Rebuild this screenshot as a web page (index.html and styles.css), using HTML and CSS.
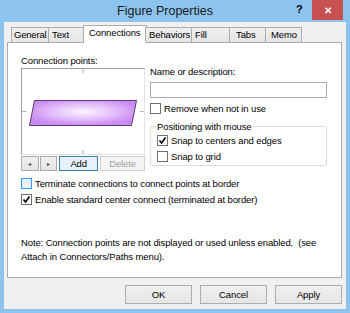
FILE: index.html
```html
<!DOCTYPE html>
<html lang="en">
<head>
    <meta charset="UTF-8">
    <title>Figure Properties</title>
    <link rel="stylesheet" href="styles.css">
</head>
<body>
    <div class="window">
        <div class="titlebar">
            <span class="title">Figure Properties</span>
            <span class="help">?</span>
            <span class="close">&#x2715;</span>
        </div>
        <div class="client">
            <div class="tabs">
                <div class="tab t-general">General</div>
                <div class="tab t-text">Text</div>
                <div class="tab active">Connections</div>
                <div class="tab t-behaviors">Behaviors</div>
                <div class="tab t-fill">Fill</div>
                <div class="tab t-tabs">Tabs</div>
                <div class="tab t-memo">Memo</div>
            </div>
            <div class="panel">
                <div class="top-row">
                    <div class="left-col">
                        <div class="label">Connection points:</div>
                        <div class="preview">
                            <svg width="122" height="85" viewBox="0 0 122 85">
                                <defs>
                                    <radialGradient id="shapeFill" cx="0.5" cy="0.45" r="0.55">
                                        <stop offset="0" stop-color="#fbf4ff"/>
                                        <stop offset="0.55" stop-color="#e3bdfa"/>
                                        <stop offset="1" stop-color="#c98af2"/>
                                    </radialGradient>
                                </defs>
                                <line x1="61" y1="0" x2="61" y2="4" stroke="#b0b0b0"/>
                                <line x1="61" y1="81" x2="61" y2="85" stroke="#b0b0b0"/>
                                <line x1="0" y1="42.5" x2="4" y2="42.5" stroke="#b0b0b0"/>
                                <line x1="118" y1="42.5" x2="122" y2="42.5" stroke="#b0b0b0"/>
                                <polygon points="12.5,31.5 114.5,31.5 109.5,56.5 7.5,56.5" fill="url(#shapeFill)" stroke="#5c3a6c" stroke-width="1"/>
                            </svg>
                        </div>
                        <div class="point-buttons">
                            <div class="btn small">&#9666;</div>
                            <div class="btn small">&#9656;</div>
                            <div class="btn add">Add</div>
                            <div class="btn delete">Delete</div>
                        </div>
                    </div>
                    <div class="right-col">
                        <div class="label">Name or description:</div>
                        <div class="textbox"></div>
                        <label class="check remove"><span class="box"></span>Remove when not in use</label>
                        <fieldset class="group">
                            <legend>Positioning with mouse</legend>
                            <label class="check"><span class="box checked"><svg width="9" height="9" viewBox="0 0 9 9"><path d="M1.5 4.5 L3.5 7 L7.5 1.5" fill="none" stroke="#000" stroke-width="1.6"/></svg></span>Snap to centers and edges</label>
                            <label class="check"><span class="box"></span>Snap to grid</label>
                        </fieldset>
                    </div>
                </div>
                <label class="check wide first"><span class="box focus"></span>Terminate connections to connect points at border</label>
                <label class="check wide"><span class="box checked"><svg width="9" height="9" viewBox="0 0 9 9"><path d="M1.5 4.5 L3.5 7 L7.5 1.5" fill="none" stroke="#000" stroke-width="1.6"/></svg></span>Enable standard center connect (terminated at border)</label>
                <p class="note">Note: Connection points are not displayed or used unless enabled.&nbsp; (see<br>Attach in Connectors/Paths menu).</p>
            </div>
            <div class="footer">
                <div class="btn dlg">OK</div>
                <div class="btn dlg">Cancel</div>
                <div class="btn dlg">Apply</div>
            </div>
        </div>
    </div>
</body>
</html>
```

FILE: styles.css
```css
body {
    margin: 0;
    font-family: "Liberation Sans", Arial, sans-serif;
    font-size: 9.5px;
    letter-spacing: -0.12px;
    color: #000;
}
.window {
    width: 350px;
    height: 313px;
    background: #8cc3ef;
    display: flex;
    flex-direction: column;
    box-sizing: border-box;
    padding: 0 4px 4px 4px;
}
.titlebar {
    height: 22px;
    display: flex;
    align-items: center;
}
.title {
    flex: 1;
    text-align: center;
    font-size: 12.5px;
    letter-spacing: 0;
    color: #1a1a1a;
    padding-left: 30px;
}
.help {
    font-weight: bold;
    font-size: 11px;
    width: 16px;
    margin-top: -4px;
}
.close {
    width: 31px;
    height: 20px;
    margin-top: -2px;
    margin-right: 3px;
    background: #c75050;
    color: #fff;
    font-size: 10px;
    font-weight: bold;
    display: flex;
    align-items: center;
    justify-content: center;
}
.client {
    flex: 1;
    background: #f0f0f0;
    display: flex;
    flex-direction: column;
    padding: 3px 4px 0 3px;
}
.tabs {
    display: flex;
    padding-left: 4px;
    height: 17px;
    align-items: flex-end;
    position: relative;
    z-index: 1;
}
.tab {
    height: 15px;
    box-sizing: border-box;
    border: 1px solid #acacac;
    border-bottom: none;
    background: linear-gradient(#f0f0f0, #e5e5e5);
    padding: 1px 0 0 3px;
    margin-left: -1px;
    white-space: nowrap;
    overflow: hidden;
}
.t-general { width: 38px; margin-left: 0; padding-left: 2px; letter-spacing: -0.2px; }
.t-text { width: 36px; }
.t-behaviors { width: 47px; }
.t-fill { width: 39px; }
.t-tabs { width: 37px; padding-left: 6px; }
.t-memo { width: 37px; padding-left: 5px; }
.tab.active {
    width: 64px;
    height: 18px;
    background: #fff;
    padding: 1px 0 0 5px;
    margin-bottom: -1px;
    margin-right: -1px;
}
.panel {
    height: 236px;
    box-sizing: border-box;
    background: #fff;
    border: 1px solid #acacac;
    padding: 11px 13px 0 13px;
}
.top-row {
    display: flex;
}
.left-col {
    width: 124px;
}
.label {
    height: 13px;
    line-height: 13px;
}
.preview {
    margin-top: 1px;
    width: 124px;
    height: 87px;
    box-sizing: border-box;
    border: 1px solid #a0a0a0;
    border-right-color: #e3e3e3;
    border-bottom-color: #e3e3e3;
}
.preview svg {
    display: block;
}
.point-buttons {
    display: flex;
    margin-top: 1px;
    gap: 1px;
}
.btn {
    box-sizing: border-box;
    border: 1px solid #acacac;
    background: linear-gradient(#f0f0f0, #e5e5e5);
    display: flex;
    align-items: center;
    justify-content: center;
    height: 15px;
}
.btn.small {
    width: 18px;
    font-size: 6px;
    color: #444;
}
.btn.add {
    width: 40px;
    border-color: #3c7fb1;
    background: #e5f1fb;
    margin-left: 1px;
}
.btn.delete {
    width: 46px;
    color: #a0a0a0;
    background: #f4f4f4;
    border-color: #d0d0d0;
    margin-left: 1px;
}
.right-col {
    margin-left: 5px;
    padding-top: 11px;
    width: 177px;
}
.textbox {
    margin-top: 4px;
    height: 16px;
    border: 1px solid #abadb3;
    box-sizing: border-box;
}
.check {
    display: flex;
    align-items: center;
    height: 15px;
    white-space: nowrap;
}
.box {
    width: 9px;
    height: 9px;
    border: 1px solid #707070;
    background: #fff;
    margin-right: 3px;
    display: flex;
    align-items: center;
    justify-content: center;
    flex: none;
}
.box.focus {
    border-color: #3399ff;
    background: #eaf3fd;
}
.remove {
    margin-top: 3px;
}
.group {
    margin: 5px 0 0 0;
    border: 1px solid #dcdcdc;
    border-radius: 2px;
    padding: 0 6px 2px 6px;
    height: 45px;
    box-sizing: border-box;
}
.group legend {
    padding: 0 1px;
    margin-left: -1px;
}
.group .check {
    height: 16px;
}
.wide {
    height: 16px;
}
.wide.first {
    margin-top: 4px;
}
.note {
    margin: 29px 0 0 0;
    line-height: 14px;
    white-space: nowrap;
}
.footer {
    display: flex;
    justify-content: flex-end;
    gap: 8px;
    padding-top: 7px;
}
.btn.dlg {
    width: 67px;
    height: 19px;
}
```
